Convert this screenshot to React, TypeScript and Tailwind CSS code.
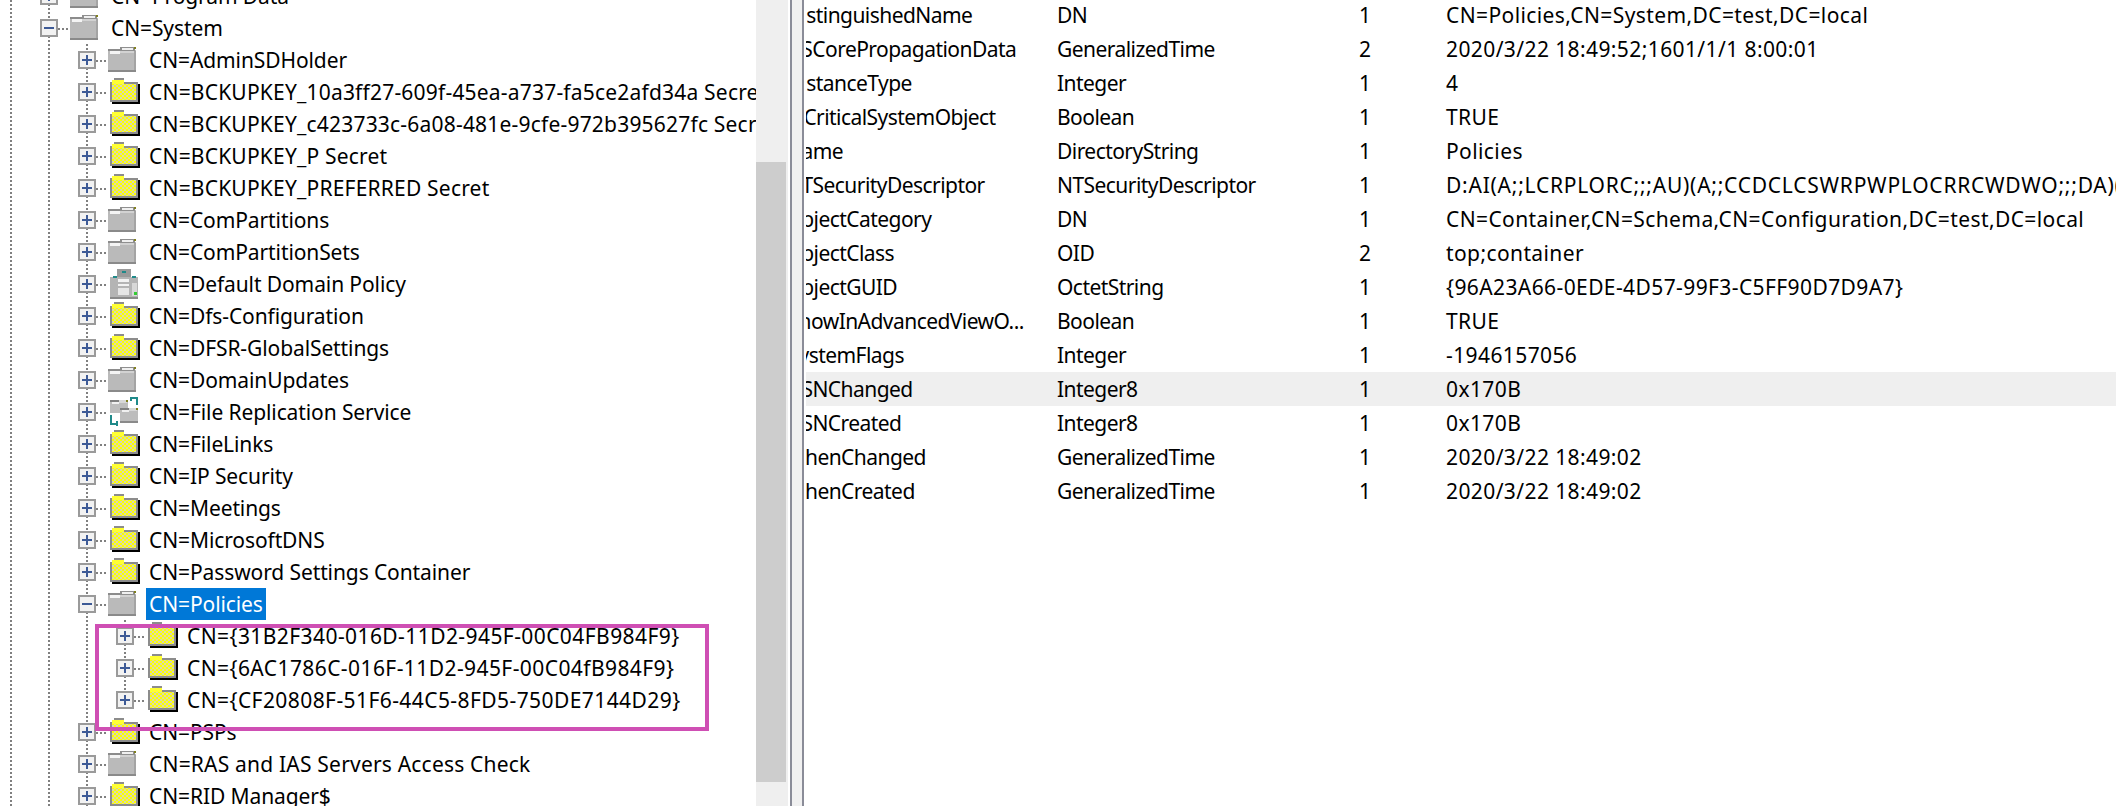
const guideClass =
  "absolute left-1/2 -ml-px w-0.5 bg-[repeating-linear-gradient(to_bottom,#808080_0,#808080_2px,transparent_2px,transparent_4px)]";

const PlusBox = ({ open }: { open: boolean }) => (
  <svg width="18" height="18" viewBox="0 0 18 18" shapeRendering="crispEdges" className="relative block">
    <rect x="1" y="1" width="16" height="16" fill="#f2f2f2" stroke="#9a9a9a" strokeWidth="2" />
    <rect x="4" y="8" width="10" height="2" fill="#3d5a96" />
    {!open && <rect x="8" y="4" width="2" height="10" fill="#3d5a96" />}
  </svg>
);

const GrayFolder = () => (
  <svg width="32" height="30" viewBox="0 0 32 30" shapeRendering="crispEdges" className="block">
    <rect x="0" y="5" width="28" height="22" fill="#bababa" />
    <rect x="0" y="4" width="12" height="2" fill="#8c8c8c" />
    <rect x="2" y="6" width="10" height="3" fill="#f4f4f4" />
    <rect x="12" y="2" width="15" height="4" fill="#8f8f8f" />
    <rect x="14" y="3" width="11" height="2" fill="#f0f0f0" />
    <rect x="26" y="2" width="2" height="2" fill="#80801e" />
    <rect x="12" y="6" width="14" height="2" fill="#d2d2d2" />
    <rect x="0" y="25" width="28" height="2" fill="#8a8a8a" />
    <rect x="26" y="6" width="2" height="19" fill="#a4a4a4" />
  </svg>
);

const YellowFolder = () => (
  <svg width="32" height="30" viewBox="0 0 32 30" shapeRendering="crispEdges" className="block">
    <defs>
      <pattern id="chk" width="4" height="4" patternUnits="userSpaceOnUse">
        <rect width="4" height="4" fill="#ffff00" />
        <rect width="2" height="2" fill="#d8d8b0" />
        <rect x="2" y="2" width="2" height="2" fill="#d8d8b0" />
      </pattern>
    </defs>
    <rect x="6" y="1" width="10" height="2" fill="#8c8c8c" />
    <rect x="4" y="3" width="12" height="3" fill="#ffff33" />
    <rect x="2" y="5" width="28" height="20" fill="#8c8c8c" />
    <rect x="4" y="5" width="12" height="2" fill="#ffff33" />
    <rect x="4" y="7" width="24" height="16" fill="url(#chk)" />
    <rect x="4" y="25" width="28" height="2" fill="#000000" />
    <rect x="30" y="7" width="2" height="20" fill="#000000" />
  </svg>
);

const GpoIcon = () => (
  <svg width="32" height="30" viewBox="0 0 32 30" shapeRendering="crispEdges" className="block">
    <rect x="2" y="8" width="28" height="22" fill="#b4b4b4" />
    <rect x="9" y="0" width="14" height="8" fill="#9a9a9a" />
    <rect x="14" y="2" width="4" height="2" fill="#1f8a8a" />
    <rect x="5" y="7" width="4" height="2" fill="#1f8a8a" />
    <rect x="24" y="7" width="4" height="2" fill="#1f8a8a" />
    <rect x="10" y="10" width="11" height="3" fill="#f2f2f2" />
    <rect x="10" y="15" width="11" height="2" fill="#f2f2f2" />
    <rect x="10" y="19" width="11" height="7" fill="#e6e6e6" />
    <rect x="24" y="14" width="5" height="13" fill="#d8d8d8" />
    <rect x="26" y="23" width="3" height="3" fill="#33cc33" />
    <rect x="2" y="28" width="28" height="2" fill="#8a8a8a" />
  </svg>
);

const ReplicationIcon = () => (
  <svg width="32" height="30" viewBox="0 0 32 30" shapeRendering="crispEdges" className="block">
    <rect x="2" y="3" width="18" height="13" fill="#bdbdbd" />
    <rect x="2" y="3" width="9" height="2" fill="#808080" />
    <rect x="4" y="5" width="7" height="2" fill="#f0f0f0" />
    <rect x="11" y="3" width="8" height="3" fill="#d8d8d8" />
    <rect x="18" y="3" width="2" height="2" fill="#80801e" />
    <rect x="12" y="11" width="18" height="15" fill="#bdbdbd" />
    <rect x="12" y="11" width="9" height="2" fill="#808080" />
    <rect x="14" y="13" width="7" height="2" fill="#f0f0f0" />
    <rect x="21" y="11" width="8" height="3" fill="#d8d8d8" />
    <rect x="28" y="11" width="2" height="2" fill="#80801e" />
    <rect x="12" y="24" width="18" height="2" fill="#8a8a8a" />
    <rect x="22" y="0" width="8" height="2" fill="#1f8a8a" />
    <rect x="28" y="0" width="2" height="8" fill="#1f8a8a" />
    <rect x="22" y="0" width="2" height="4" fill="#1f8a8a" />
    <rect x="2" y="18" width="2" height="10" fill="#1f8a8a" />
    <rect x="2" y="26" width="8" height="2" fill="#1f8a8a" />
    <rect x="8" y="24" width="2" height="5" fill="#1f8a8a" />
  </svg>
);

type Icon = "gray" | "yellow" | "gpo" | "repl";

const icons = {
  gray: GrayFolder,
  yellow: YellowFolder,
  gpo: GpoIcon,
  repl: ReplicationIcon,
};

type TreeRow = {
  label: string;
  level: number;
  icon: Icon;
  open?: boolean;
  selected?: boolean;
  last?: boolean;
  spacing?: string;
};

// Tahoma's capitals and digits run wider than Noto Sans, so those rows get some tracking
const capsSpacing = "tracking-[0.2px]";
const guidSpacing = "tracking-[0.42px]";

const treeRows: TreeRow[] = [
  { label: "CN=Program Data", level: 1, icon: "gray" },
  { label: "CN=System", level: 1, icon: "gray", open: true },
  { label: "CN=AdminSDHolder", level: 2, icon: "gray" },
  { label: "CN=BCKUPKEY_10a3ff27-609f-45ea-a737-fa5ce2afd34a Secret", level: 2, icon: "yellow", spacing: capsSpacing },
  { label: "CN=BCKUPKEY_c423733c-6a08-481e-9cfe-972b395627fc Secret", level: 2, icon: "yellow", spacing: capsSpacing },
  { label: "CN=BCKUPKEY_P Secret", level: 2, icon: "yellow", spacing: capsSpacing },
  { label: "CN=BCKUPKEY_PREFERRED Secret", level: 2, icon: "yellow", spacing: capsSpacing },
  { label: "CN=ComPartitions", level: 2, icon: "gray" },
  { label: "CN=ComPartitionSets", level: 2, icon: "gray" },
  { label: "CN=Default Domain Policy", level: 2, icon: "gpo" },
  { label: "CN=Dfs-Configuration", level: 2, icon: "yellow" },
  { label: "CN=DFSR-GlobalSettings", level: 2, icon: "yellow" },
  { label: "CN=DomainUpdates", level: 2, icon: "gray" },
  { label: "CN=File Replication Service", level: 2, icon: "repl" },
  { label: "CN=FileLinks", level: 2, icon: "yellow" },
  { label: "CN=IP Security", level: 2, icon: "yellow" },
  { label: "CN=Meetings", level: 2, icon: "yellow" },
  { label: "CN=MicrosoftDNS", level: 2, icon: "yellow" },
  { label: "CN=Password Settings Container", level: 2, icon: "yellow" },
  { label: "CN=Policies", level: 2, icon: "gray", open: true, selected: true },
  { label: "CN={31B2F340-016D-11D2-945F-00C04FB984F9}", level: 3, icon: "yellow", spacing: guidSpacing },
  { label: "CN={6AC1786C-016F-11D2-945F-00C04fB984F9}", level: 3, icon: "yellow", spacing: guidSpacing },
  { label: "CN={CF20808F-51F6-44C5-8FD5-750DE7144D29}", level: 3, icon: "yellow", last: true, spacing: guidSpacing },
  { label: "CN=PSPs", level: 2, icon: "yellow" },
  { label: "CN=RAS and IAS Servers Access Check", level: 2, icon: "gray", spacing: capsSpacing },
  { label: "CN=RID Manager$", level: 2, icon: "yellow" },
];

const attrs = [
  ["distinguishedName", "DN", "1", "CN=Policies,CN=System,DC=test,DC=local"],
  ["dSCorePropagationData", "GeneralizedTime", "2", "2020/3/22 18:49:52;1601/1/1 8:00:01"],
  ["instanceType", "Integer", "1", "4"],
  ["isCriticalSystemObject", "Boolean", "1", "TRUE"],
  ["name", "DirectoryString", "1", "Policies"],
  ["nTSecurityDescriptor", "NTSecurityDescriptor", "1", "D:AI(A;;LCRPLORC;;;AU)(A;;CCDCLCSWRPWPLOCRRCWDWO;;;DA)("],
  ["objectCategory", "DN", "1", "CN=Container,CN=Schema,CN=Configuration,DC=test,DC=local"],
  ["objectClass", "OID", "2", "top;container"],
  ["objectGUID", "OctetString", "1", "{96A23A66-0EDE-4D57-99F3-C5FF90D7D9A7}"],
  ["showInAdvancedViewO...", "Boolean", "1", "TRUE"],
  ["systemFlags", "Integer", "1", "-1946157056"],
  ["uSNChanged", "Integer8", "1", "0x170B"],
  ["uSNCreated", "Integer8", "1", "0x170B"],
  ["whenChanged", "GeneralizedTime", "1", "2020/3/22 18:49:02"],
  ["whenCreated", "GeneralizedTime", "1", "2020/3/22 18:49:02"],
];

const Row = ({ row }: { row: TreeRow }) => {
  const FolderIcon = icons[row.icon];
  return (
    <div className="flex h-8 items-center">
      {Array.from({ length: row.level }).map((_, i) => (
        <div key={i} className="relative h-full w-[38px] shrink-0">
          <div className={`${guideClass} inset-y-0`} />
        </div>
      ))}
      <div className="relative flex h-full w-[38px] shrink-0 items-center justify-center">
        <div className={`${guideClass} top-0 ${row.last ? "h-1/2" : "bottom-0"}`} />
        <PlusBox open={!!row.open} />
        <div className="absolute left-7 top-1/2 h-0.5 w-3 bg-[repeating-linear-gradient(to_right,#808080_0,#808080_2px,transparent_2px,transparent_4px)]" />
      </div>
      <div className="ml-0.5 shrink-0">
        <FolderIcon />
      </div>
      <span
        className={`ml-1.5 flex h-8 shrink-0 items-center whitespace-nowrap px-[3px] pt-px ${
          row.spacing ?? "tracking-[-0.1px]"
        } ${row.selected ? "bg-[#0078d7] text-white" : ""}`}
      >
        {row.label}
      </span>
    </div>
  );
};

export default function App() {
  return (
    <div className="flex h-[806px] w-[2116px] overflow-hidden bg-white font-['Noto_Sans',sans-serif] text-[21px] text-black">
      <div className="relative h-full w-[756px] shrink-0 overflow-hidden">
        <div className="-ml-2 -mt-5">
          {treeRows.map((row) => (
            <Row key={row.label} row={row} />
          ))}
        </div>
        <div className="absolute left-[95px] top-[624px] h-[107px] w-[614px] border-4 border-[#cf4fb4]" />
      </div>
      <div className="flex h-full w-8 shrink-0 flex-col bg-[#efefef]">
        <div className="h-[162px]" />
        <div className="h-[620px] w-[30px] bg-[#cdcdcd]" />
      </div>
      <div className="ml-0.5 h-full w-0.5 shrink-0 bg-[#8a8c98]" />
      <div className="h-full w-2.5 shrink-0 bg-[#f0f0f0]" />
      <div className="h-full w-0.5 shrink-0 bg-[#8a8c98]" />
      <div className="min-w-0 flex-1 overflow-hidden pl-0.5">
        <div className="-mt-0.5">
          {attrs.map(([name, syntax, count, value], i) => (
            <div key={name} className={`flex h-[34px] items-center whitespace-nowrap pt-px ${i === 11 ? "bg-[#efefef]" : ""}`}>
              <div className="w-[251px] shrink-0 overflow-hidden tracking-[-0.55px]">
                <div className="-ml-[17px]">{name}</div>
              </div>
              <div className="w-[302px] shrink-0 tracking-[-0.55px]">{syntax}</div>
              <div className="w-[87px] shrink-0">{count}</div>
              <div className={i === 5 ? "tracking-[0.76px]" : "tracking-[0.4px]"}>{value}</div>
            </div>
          ))}
        </div>
      </div>
    </div>
  );
}
